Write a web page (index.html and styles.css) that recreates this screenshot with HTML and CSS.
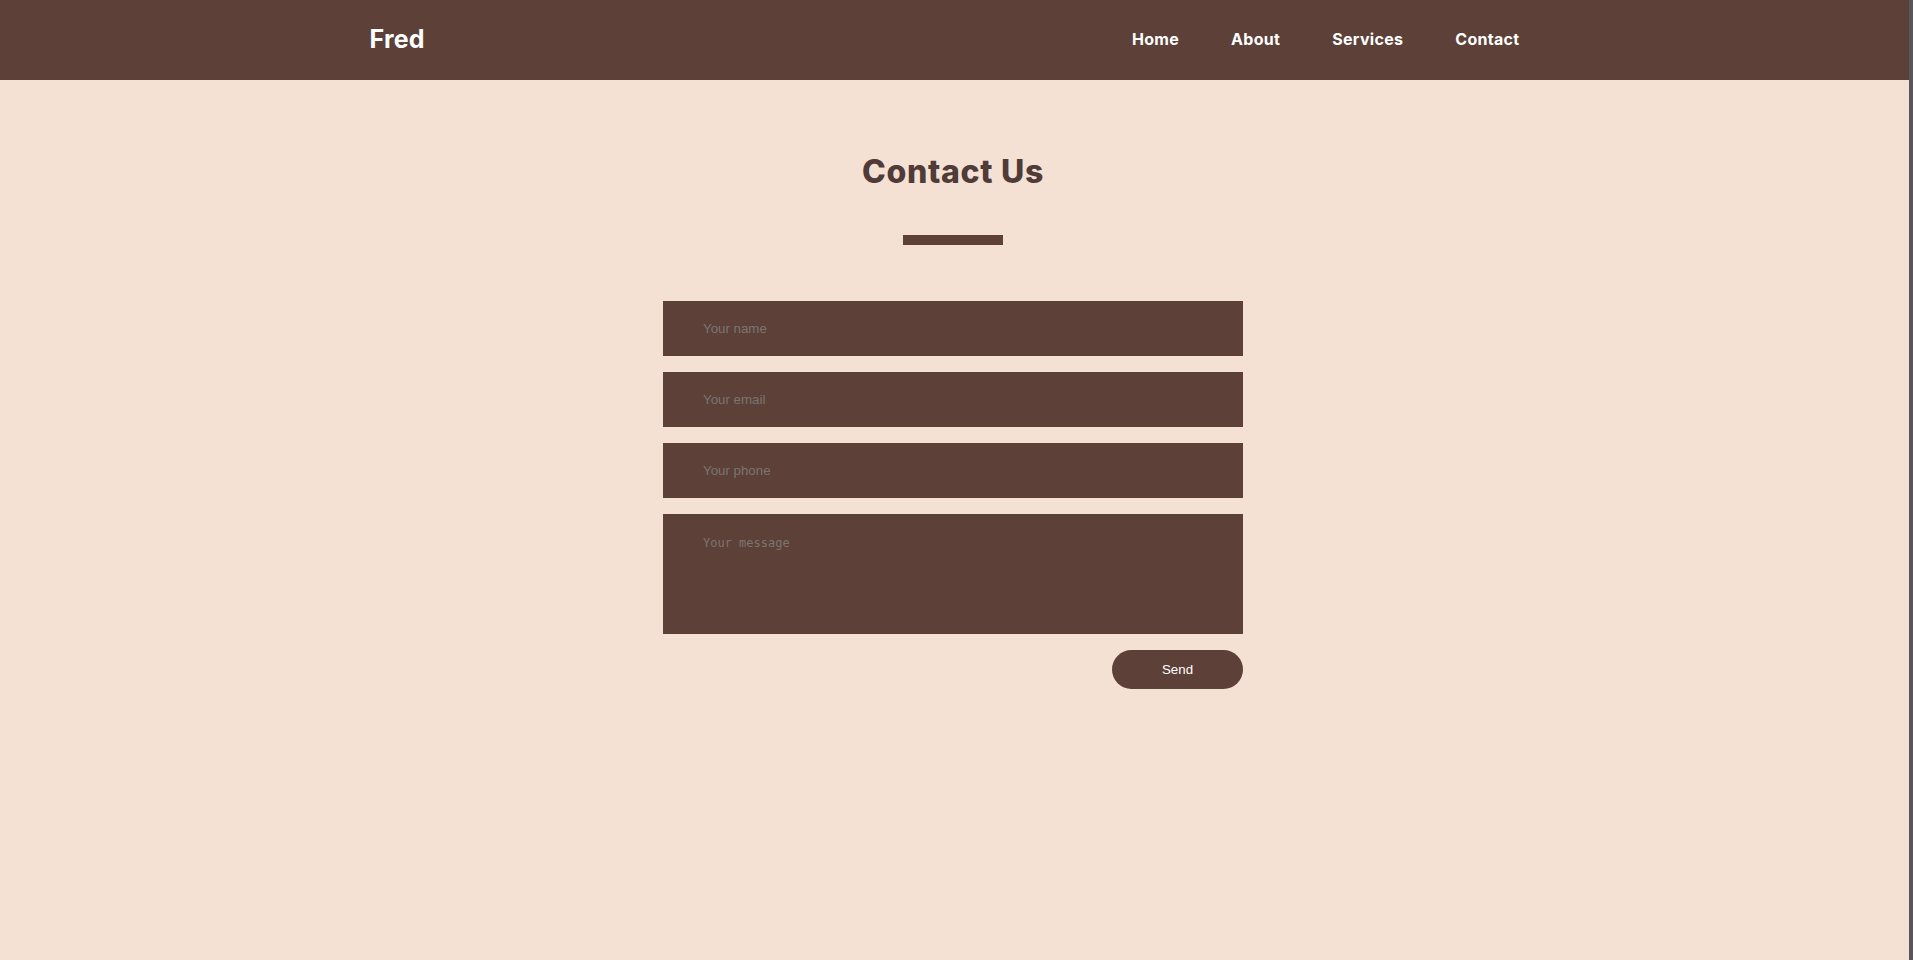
FILE: index.html
```html
<!DOCTYPE html>
<html lang="en">
<head>
<meta charset="utf-8">
<title>Fred - Contact</title>
<link rel="stylesheet" href="styles.css">
</head>
<body>
<header class="site-header">
  <div class="container nav-inner">
    <a class="logo" href="#">Fred</a>
    <nav>
      <ul class="nav-links">
        <li><a href="#">Home</a></li>
        <li><a href="#">About</a></li>
        <li><a href="#">Services</a></li>
        <li><a href="#">Contact</a></li>
      </ul>
    </nav>
  </div>
</header>
<main class="contact">
  <h1 class="contact-title">Contact Us</h1>
  <div class="divider"></div>
  <form class="contact-form">
    <input class="field" type="text" placeholder="Your name">
    <input class="field" type="email" placeholder="Your email">
    <input class="field" type="tel" placeholder="Your phone">
    <textarea class="field field-message" placeholder="Your message"></textarea>
    <div class="form-actions">
      <button class="send-btn" type="button">Send</button>
    </div>
  </form>
</main>
</body>
</html>
```

FILE: styles.css
```css
html {
  background: #55575c;
  height: 100%;
}
body {
  margin: 0 4px 0 0;
  min-height: 100%;
  background: #f4e1d3;
  font-family: Inter, "Liberation Sans", sans-serif;
}
.container {
  width: 1170px;
  margin: 0 auto;
}
.site-header {
  background: #5d4037;
  height: 80px;
}
.nav-inner {
  box-sizing: border-box;
  height: 80px;
  padding-bottom: 3px;
  display: flex;
  align-items: center;
  justify-content: space-between;
}
.logo {
  color: #fff;
  text-decoration: none;
  font-weight: 700;
  font-size: 25px;
  letter-spacing: 0.2px;
}
.nav-links {
  list-style: none;
  margin: 0 20px 0 0;
  padding: 0;
  display: flex;
  gap: 52px;
}
.nav-links a {
  color: #fff;
  text-decoration: none;
  font-weight: 700;
  font-size: 16px;
  letter-spacing: 0.3px;
}
.contact {
  display: flex;
  flex-direction: column;
  align-items: center;
  padding: 72px 3px 0 0;
}
.contact-title {
  margin: 0;
  font-size: 32px;
  font-weight: 800;
  color: #4f3b38;
  line-height: 39px;
  letter-spacing: 0.7px;
}
.divider {
  width: 100px;
  height: 10px;
  background: #5d4037;
  margin-top: 44px;
}
.contact-form {
  width: 580px;
  margin-top: 56px;
  display: flex;
  flex-direction: column;
  gap: 16px;
}
.field {
  -webkit-appearance: none;
  appearance: none;
  box-sizing: border-box;
  width: 100%;
  height: 55px;
  margin: 0;
  border: 0;
  border-radius: 0;
  outline: none;
  background: #5d4037;
  padding: 0 40px;
  color: #fff;
  font-family: "Liberation Sans", Arial, sans-serif;
  font-size: 13.3px;
}
.field::placeholder {
  color: #7b7572;
}
.field-message {
  height: 120px;
  padding: 22px 40px;
  resize: none;
  font-family: "DejaVu Sans Mono", "Liberation Mono", monospace;
  font-size: 12px;
  display: block;
}
.form-actions {
  display: flex;
  justify-content: flex-end;
}
.send-btn {
  width: 131px;
  height: 39px;
  border: none;
  border-radius: 20px;
  background: #5d4037;
  color: #fff;
  font-family: "Liberation Sans", Arial, sans-serif;
  font-size: 13.3px;
  cursor: pointer;
}
```
